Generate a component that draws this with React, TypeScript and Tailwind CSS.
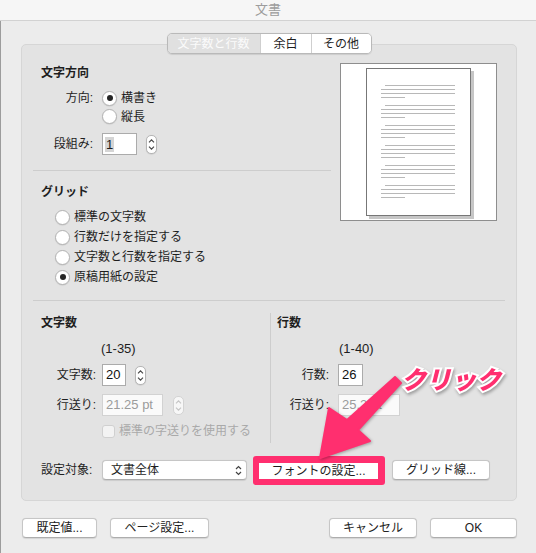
import clsx from "clsx";

const PINK = "#ff2f6f";

function Radio({ checked }: { checked?: boolean }) {
  return (
    <span className="flex h-[15px] w-[15px] shrink-0 items-center justify-center rounded-full border border-[#b3b3b3] bg-white shadow-[0_0.5px_1px_rgba(0,0,0,0.12)]">
      {checked && <span className="h-[6px] w-[6px] rounded-full bg-[#262626]" />}
    </span>
  );
}

function Stepper({ disabled, className }: { disabled?: boolean; className?: string }) {
  const c = disabled ? "#c6c6c6" : "#4a4a4a";
  return (
    <span
      className={clsx(
        "flex h-[19px] w-[11px] shrink-0 flex-col items-center justify-center gap-[3px] rounded-[5px] border",
        disabled ? "border-[#d3d3d3] bg-[#f7f7f7]" : "border-[#b5b5b5] bg-white shadow-[0_0.5px_1px_rgba(0,0,0,0.12)]",
        className
      )}
    >
      <svg width="7" height="4" viewBox="0 0 7 4">
        <path d="M1 3.4 L3.5 0.9 L6 3.4" fill="none" stroke={c} strokeWidth="1.2" />
      </svg>
      <svg width="7" height="4" viewBox="0 0 7 4">
        <path d="M1 0.6 L3.5 3.1 L6 0.6" fill="none" stroke={c} strokeWidth="1.2" />
      </svg>
    </span>
  );
}

function Field({
  value,
  width,
  disabled,
  className,
}: {
  value: string;
  width: string;
  disabled?: boolean;
  className?: string;
}) {
  return (
    <span
      className={clsx(
        "flex h-[22px] shrink-0 items-center border px-[3px] text-[13px]",
        disabled ? "border-[#d2d2d2] bg-[#fafafa] text-[#9b9b9b]" : "border-[#ababab] bg-white text-[#111]",
        width,
        className
      )}
    >
      {value}
    </span>
  );
}

function Button({ label, className }: { label: string; className?: string }) {
  return (
    <span
      className={clsx(
        "flex h-[20px] shrink-0 items-center justify-center rounded-[4px] border border-[#c6c6c6] border-b-[#adadad] bg-white text-[12px] text-[#222] shadow-[0_0.5px_1px_rgba(0,0,0,0.1)]",
        className
      )}
    >
      {label}
    </span>
  );
}

function PagePreview() {
  const groups = [0, 1, 2, 3, 4, 5];
  return (
    <div className="ml-[9px] mt-[18px] flex h-[158px] w-[157px] items-center justify-center border border-[#8e8e8e] bg-white">
      <div className="h-[148px] w-[105px] border border-[#777] bg-white shadow-[3px_3px_0_#c6c6c6]">
        <svg width="103" height="146" viewBox="0 0 103 146">
          {groups.map((g) => {
            const y = 16.5 + g * 20;
            return (
              <g key={g} stroke="#b8b8b8" strokeWidth="1">
                <line x1="18" y1={y} x2="88" y2={y} />
                <line x1="14" y1={y + 4} x2="88" y2={y + 4} />
                <line x1="14" y1={y + 8} x2="88" y2={y + 8} />
                <line x1="14" y1={y + 12} x2="38" y2={y + 12} />
              </g>
            );
          })}
        </svg>
      </div>
    </div>
  );
}

export default function App() {
  return (
    <div className="relative h-[553px] w-[536px] overflow-hidden bg-[#ececec] font-[Liberation_Sans,Noto_Sans_CJK_JP,sans-serif] text-[12px] text-[#1e1e1e]">
      <div className="flex h-[21px] items-center justify-center border-b border-[#d2d2d2] bg-[#f6f6f6] text-[13px] text-[#9d9d9d]">
        文書
      </div>

      <div className="h-[532px] border-l border-[#9c9c9c] pl-[20px] pt-[12px]">
        <div className="w-[496px]">
          {/* tabs */}
          <div className="relative z-10 flex justify-center">
            <div className="flex h-[21px] overflow-hidden rounded-[5px] border border-[#b9b9b9] shadow-[0_0.5px_1px_rgba(0,0,0,0.1)]">
              <span className="flex w-[92px] items-center justify-center bg-[#e0e0e0] text-[#fbfbfb]">文字数と行数</span>
              <span className="flex w-[51px] items-center justify-center border-l border-[#cfcfcf] bg-white">余白</span>
              <span className="flex w-[60px] items-center justify-center border-l border-[#cfcfcf] bg-white">その他</span>
            </div>
          </div>

          {/* group box */}
          <div className="-mt-[10px] h-[457px] rounded-[5px] border border-[#d6d6d6] bg-[#e3e3e3] px-[11px]">
            <div className="flex h-[255px]">
              <div className="w-[298px]">
                <div className="pl-[8px] pt-[20px]">
                  <div className="h-[16px] font-bold leading-[16px]">文字方向</div>
                  <div className="mt-[8px] flex h-[18px] items-center">
                    <span className="w-[52px] shrink-0 text-right">方向:</span>
                    <span className="ml-[9px]">
                      <Radio checked />
                    </span>
                    <span className="ml-[4px]">横書き</span>
                  </div>
                  <div className="flex h-[19px] items-center pl-[61px]">
                    <Radio />
                    <span className="ml-[4px]">縦長</span>
                  </div>
                  <div className="mt-[7px] flex h-[22px] items-center">
                    <span className="w-[52px] shrink-0 text-right">段組み:</span>
                    <span className="ml-[9px] flex h-[22px] w-[35px] items-center border border-[#ababab] bg-white pl-[2px] text-[13px]">
                      <span className="bg-[#d5d5d5] px-[1px] leading-[15px]">1</span>
                    </span>
                    <Stepper className="ml-[9px]" />
                  </div>
                </div>
                <div className="mt-[15px] h-px bg-[#cdcdcd]" />
                <div className="pl-[8px] pt-[13px]">
                  <div className="h-[16px] font-bold leading-[16px]">グリッド</div>
                  <div className="mt-[7px] flex flex-col pl-[14px]">
                    {["標準の文字数", "行数だけを指定する", "文字数と行数を指定する", "原稿用紙の設定"].map((t, i) => (
                      <div key={t} className="flex h-[20px] items-center">
                        <Radio checked={i === 3} />
                        <span className="ml-[4px]">{t}</span>
                      </div>
                    ))}
                  </div>
                </div>
              </div>
              <PagePreview />
            </div>
            <div className="h-px bg-[#cdcdcd]" />

            <div className="flex h-[146px]">
              <div className="w-[237px] pl-[8px] pt-[14px]">
                <div className="h-[16px] font-bold leading-[16px]">文字数</div>
                <div className="mt-[10px] h-[16px] pl-[60px] text-[13px] leading-[16px]">(1-35)</div>
                <div className="mt-[7px] flex h-[22px] items-center">
                  <span className="w-[55px] shrink-0 text-right">文字数:</span>
                  <Field value="20" width="w-[24px]" className="ml-[6px]" />
                  <Stepper className="ml-[9px]" />
                </div>
                <div className="mt-[8px] flex h-[22px] items-center">
                  <span className="w-[55px] shrink-0 text-right">行送り:</span>
                  <Field value="21.25 pt" width="w-[61px]" className="ml-[6px]" disabled />
                  <Stepper className="ml-[10px]" disabled />
                </div>
                <div className="mt-[8px] flex h-[14px] items-center pl-[61px]">
                  <span className="h-[13px] w-[13px] shrink-0 rounded-[3px] border border-[#d0d0d0] bg-[#f3f3f3]" />
                  <span className="ml-[4px] text-[#a9a9a9]">標準の字送りを使用する</span>
                </div>
              </div>
              <div className="mt-[12px] h-[130px] w-px bg-[#cdcdcd]" />
              <div className="flex-1 pl-[6px] pt-[14px]">
                <div className="h-[16px] font-bold leading-[16px]">行数</div>
                <div className="mt-[10px] h-[16px] pl-[62px] text-[13px] leading-[16px]">(1-40)</div>
                <div className="mt-[7px] flex h-[22px] items-center">
                  <span className="w-[52px] shrink-0 text-right">行数:</span>
                  <Field value="26" width="w-[25px]" className="ml-[9px]" />
                </div>
                <div className="mt-[8px] flex h-[22px] items-center">
                  <span className="w-[52px] shrink-0 text-right">行送り:</span>
                  <Field value="25.2 pt" width="w-[62px]" className="ml-[9px]" disabled />
                </div>
              </div>
            </div>

            <div className="mt-[8px] flex h-[30px] items-center pl-[8px]">
              <span className="w-[52px] shrink-0">設定対象:</span>
              <span className="ml-[9px] flex h-[20px] w-[145px] shrink-0 items-center justify-between rounded-[4px] border border-[#c6c6c6] border-b-[#adadad] bg-white pl-[8px] pr-[4px] shadow-[0_0.5px_1px_rgba(0,0,0,0.1)]">
                <span>文書全体</span>
                <svg width="7" height="11" viewBox="0 0 7 11">
                  <path d="M1 4 L3.5 1.5 L6 4 M1 7 L3.5 9.5 L6 7" fill="none" stroke="#444" strokeWidth="1.2" />
                </svg>
              </span>
              <span className="ml-[6px] flex h-[29px] w-[132px] shrink-0 rounded-[3px] bg-[#ff2f6f] pb-[6px] pl-[6px] pr-[7px] pt-[7px]">
                <span className="flex h-[16px] w-[119px] items-center justify-center bg-white">フォントの設定...</span>
              </span>
              <Button label="グリッド線..." className="ml-[7px] w-[98px]" />
            </div>
          </div>

          {/* bottom buttons */}
          <div className="mt-[17px] flex h-[20px] items-center justify-between">
            <div className="flex">
              <Button label="既定値..." className="ml-[1px] w-[75px]" />
              <Button label="ページ設定..." className="ml-[13px] w-[99px]" />
            </div>
            <div className="flex">
              <Button label="キャンセル" className="w-[88px]" />
              <Button label="OK" className="ml-[13px] w-[87px]" />
            </div>
          </div>
        </div>
      </div>

      {/* annotation overlay */}
      <svg
        className="pointer-events-none absolute left-0 top-0 drop-shadow-[1px_1px_1.5px_rgba(0,0,0,0.3)]"
        width="536"
        height="553"
        viewBox="0 0 536 553"
      >
        <polygon
          points="395,377 401,383 358,430 370,441 320,458 329,408 347,420"
          fill={PINK}
          stroke={PINK}
          strokeWidth="2"
          strokeLinejoin="round"
        />
      </svg>
      <span className="pointer-events-none absolute left-[401px] top-[362px] font-[Noto_Sans_CJK_JP,sans-serif] text-[25px] font-black italic leading-[32px] text-[#ff2f6f] drop-shadow-[1px_2px_1.5px_rgba(0,0,0,0.3)] [-webkit-text-stroke:4px_#fff] [paint-order:stroke_fill]">
        クリック
      </span>
    </div>
  );
}
